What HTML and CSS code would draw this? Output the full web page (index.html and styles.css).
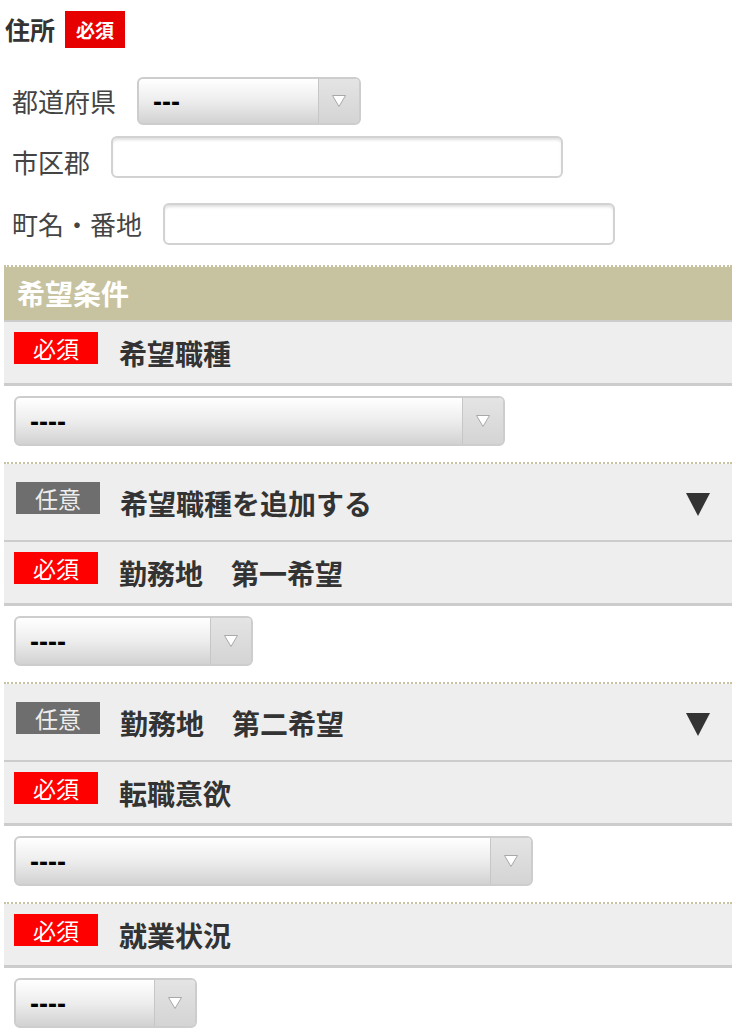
FILE: index.html
```html
<!DOCTYPE html>
<html lang="ja">
<head>
<meta charset="utf-8">
<title>住所・希望条件</title>
<link rel="stylesheet" href="styles.css">
</head>
<body>
<div class="page">
  <section class="addr">
    <div class="addr-head">
      <span class="addr-title">住所</span>
      <span class="badge-strong">必須</span>
    </div>
    <div class="addr-row row-pref">
      <span class="addr-label">都道府県</span>
      <div class="select w-pref">
        <span class="select-text">---</span>
        <span class="select-btn"><svg width="16" height="14" viewBox="0 0 16 14"><polygon points="1.5,1.5 14.5,1.5 8,12.5" fill="#fff" stroke="#a8a8a8" stroke-width="1"/></svg></span>
      </div>
    </div>
    <div class="addr-row row-city">
      <span class="addr-label">市区郡</span>
      <div class="input"></div>
    </div>
    <div class="addr-row row-town">
      <span class="addr-label">町名・番地</span>
      <div class="input"></div>
    </div>
  </section>

  <section class="cond">
    <div class="cond-head">希望条件</div>
    <div class="group first">
      <div class="item-row req">
        <span class="badge badge-req">必須</span>
        <span class="item-label">希望職種</span>
      </div>
      <div class="select-wrap">
        <div class="select w-job">
          <span class="select-text">----</span>
          <span class="select-btn"><svg width="16" height="14" viewBox="0 0 16 14"><polygon points="1.5,1.5 14.5,1.5 8,12.5" fill="#fff" stroke="#a8a8a8" stroke-width="1"/></svg></span>
        </div>
      </div>
    </div>

    <div class="group">
      <div class="item-row opt">
        <span class="badge badge-opt">任意</span>
        <span class="item-label">希望職種を追加する</span>
        <span class="toggle"></span>
      </div>
      <div class="item-row req">
        <span class="badge badge-req">必須</span>
        <span class="item-label">勤務地　第一希望</span>
      </div>
      <div class="select-wrap">
        <div class="select w-area">
          <span class="select-text">----</span>
          <span class="select-btn"><svg width="16" height="14" viewBox="0 0 16 14"><polygon points="1.5,1.5 14.5,1.5 8,12.5" fill="#fff" stroke="#a8a8a8" stroke-width="1"/></svg></span>
        </div>
      </div>
    </div>

    <div class="group">
      <div class="item-row opt">
        <span class="badge badge-opt">任意</span>
        <span class="item-label">勤務地　第二希望</span>
        <span class="toggle"></span>
      </div>
      <div class="item-row req">
        <span class="badge badge-req">必須</span>
        <span class="item-label">転職意欲</span>
      </div>
      <div class="select-wrap">
        <div class="select w-will">
          <span class="select-text">----</span>
          <span class="select-btn"><svg width="16" height="14" viewBox="0 0 16 14"><polygon points="1.5,1.5 14.5,1.5 8,12.5" fill="#fff" stroke="#a8a8a8" stroke-width="1"/></svg></span>
        </div>
      </div>
    </div>

    <div class="group">
      <div class="item-row req">
        <span class="badge badge-req">必須</span>
        <span class="item-label">就業状況</span>
      </div>
      <div class="select-wrap">
        <div class="select w-status">
          <span class="select-text">----</span>
          <span class="select-btn"><svg width="16" height="14" viewBox="0 0 16 14"><polygon points="1.5,1.5 14.5,1.5 8,12.5" fill="#fff" stroke="#a8a8a8" stroke-width="1"/></svg></span>
        </div>
      </div>
    </div>
  </section>
</div>
</body>
</html>
```
FILE: styles.css
```css
html, body {
  margin: 0;
  padding: 0;
  background: #fff;
}
body {
  font-family: "Noto Sans CJK JP", "Noto Sans", sans-serif;
  color: #333;
}
.page {
  width: 728px;
  margin-left: 4px;
}

/* ---------- address ---------- */
.addr {
  display: flex;
  flex-direction: column;
  padding-top: 11px;
}
.addr-head {
  display: flex;
  align-items: center;
  height: 37px;
  padding-left: 1px;
}
.addr-title {
  font-size: 25px;
  font-weight: 700;
  color: #333;
  line-height: 37px;
}
.badge-strong {
  margin-left: 10px;
  width: 60px;
  height: 37px;
  background: #e60000;
  color: #fff;
  font-size: 19px;
  font-weight: 700;
  line-height: 37px;
  text-align: center;
}
.addr-row {
  display: flex;
  align-items: center;
  padding-left: 8px;
  gap: 21px;
}
.row-pref { margin-top: 29px; }
.row-city { margin-top: 11px; }
.row-town { margin-top: 25px; }
.addr-label {
  font-size: 26px;
  color: #444;
  line-height: 32px;
  white-space: nowrap;
}
.row-city .addr-label { margin-top: 10px; }
.input {
  width: 452px;
  height: 42px;
  box-sizing: border-box;
  border: 2px solid #d2d2d2;
  border-radius: 6px;
  background: #fff;
  box-shadow: inset 0 3px 3px -1px rgba(0, 0, 0, 0.13);
}

/* ---------- select ---------- */
.select {
  display: flex;
  align-items: stretch;
  height: 48px;
  box-sizing: border-box;
  border: 2px solid #cdcdcd;
  border-radius: 6px;
  background: linear-gradient(to bottom, #ffffff 0%, #ededed 50%, #d2d2d2 100%);
  overflow: hidden;
}
.select-text {
  flex: 1;
  display: flex;
  align-items: center;
  padding-left: 14px;
  padding-top: 2px;
  font-family: "Liberation Sans", Arial, sans-serif;
  font-weight: 700;
  font-size: 27px;
  color: #000;
}
.select-btn {
  width: 40px;
  display: flex;
  align-items: center;
  justify-content: center;
  border-left: 1px solid #c6c6c6;
  background: linear-gradient(to bottom, #e4e4e4 0%, #d4d4d4 100%);
}
.w-pref { width: 224px; }
.w-job { width: 491px; height: 50px; }
.w-area { width: 239px; height: 50px; }
.w-will { width: 519px; height: 50px; }
.w-status { width: 183px; height: 50px; }

/* ---------- conditions ---------- */
.cond {
  margin-top: 20px;
}
.cond-head {
  border-top: 2px dotted #c7c3a0;
  background: #c7c3a0;
  background-clip: padding-box;
  height: 53px;
  line-height: 53px;
  padding-left: 13px;
  font-size: 28px;
  font-weight: 700;
  color: #fff;
  border-bottom: 2px solid #cccccc;
}
.group {
  border-top: 2px dotted #c7c3a0;
  padding-bottom: 16px;
}
.group.first {
  border-top: none;
}
.item-row {
  display: flex;
  align-items: flex-start;
  background: #eeeeee;
  box-sizing: border-box;
}
.item-row.req {
  height: 64px;
  padding-top: 10px;
  padding-left: 10px;
  border-bottom: 3px solid #cccccc;
}
.item-row.opt {
  height: 78px;
  padding-top: 18px;
  padding-left: 12px;
  border-bottom: 2px solid #cccccc;
}
.badge {
  flex: none;
  width: 84px;
  height: 32px;
  line-height: 32px;
  text-align: center;
  font-size: 23px;
  font-weight: 400;
}
.badge-req {
  background: #ff0000;
  color: #fff;
}
.badge-opt {
  background: #6e6e6e;
  color: #eeeeee;
}
.item-label {
  margin-left: 21px;
  margin-top: 4px;
  font-size: 28px;
  line-height: 34px;
  font-weight: 700;
  color: #333;
  white-space: pre;
}
.item-row.opt .item-label {
  margin-left: 20px;
}
.toggle {
  margin-left: auto;
  margin-right: 22px;
  margin-top: 11px;
  width: 0;
  height: 0;
  border-left: 12.5px solid transparent;
  border-right: 12.5px solid transparent;
  border-top: 23px solid #333;
}
.select-wrap {
  padding-top: 10px;
  padding-left: 10px;
}
```
